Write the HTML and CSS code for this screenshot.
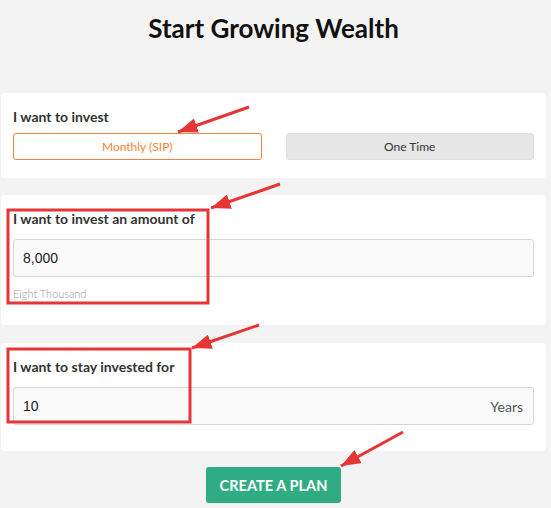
FILE: index.html
```html
<!DOCTYPE html>
<html>
<head>
<meta charset="utf-8">
<link rel="stylesheet" href="styles.css">
</head>
<body>
<div class="page">
  <h1 class="title">Start Growing Wealth</h1>

  <section class="card card-type">
    <div class="label">I want to invest</div>
    <div class="toggle">
      <button class="opt opt-active">Monthly (SIP)</button>
      <button class="opt">One Time</button>
    </div>
  </section>

  <section class="card card-amount">
    <div class="label">I want to invest an amount of</div>
    <div class="field"><span class="value">8,000</span></div>
    <div class="hint">Eight Thousand</div>
  </section>

  <section class="card card-years">
    <div class="label">I want to stay invested for</div>
    <div class="field"><span class="value">10</span><span class="unit">Years</span></div>
  </section>

  <div class="actions">
    <button class="cta">CREATE A PLAN</button>
  </div>

  <svg class="annot" width="551" height="508" viewBox="0 0 551 508">
    <defs>
      <marker id="ah" viewBox="0 0 10 10" refX="10" refY="5" markerWidth="6.5" markerHeight="5" preserveAspectRatio="none" orient="auto">
        <path d="M0,0 L10,5 L0,10 z" fill="#e53535"/>
      </marker>
    </defs>
    <g stroke="#e53535" stroke-width="3" fill="none">
      <line x1="249" y1="107" x2="178" y2="132" marker-end="url(#ah)"/>
      <line x1="280" y1="184" x2="211" y2="208" marker-end="url(#ah)"/>
      <line x1="259" y1="325" x2="192" y2="348" marker-end="url(#ah)"/>
      <line x1="403" y1="432" x2="341" y2="466" marker-end="url(#ah)"/>
      <rect x="8" y="210" width="200" height="93"/>
      <rect x="8" y="349" width="182" height="73"/>
    </g>
  </svg>
</div>
</body>
</html>
```

FILE: styles.css
```css
* { box-sizing: border-box; }
html, body {
  margin: 0;
  padding: 0;
  background: #f3f3f3;
}
body {
  font-family: Lato, "Open Sans", Arial, sans-serif;
  color: #333;
}
.page {
  position: relative;
  width: 551px;
  height: 508px;
  padding: 0 5px 0 1px;
  overflow: hidden;
}
.title {
  margin: 0;
  padding-top: 12px;
  height: 93px;
  text-align: center;
  font-size: 26px;
  line-height: 32px;
  font-weight: 700;
  color: #111;
}
.card {
  background: #fff;
  border-radius: 4px;
  padding: 14px 12px 0 12px;
}
.card + .card { margin-top: 17px; }
.card-years { margin-top: 18px !important; }
.label {
  font-size: 14px;
  line-height: 20px;
  font-weight: 700;
  color: #333;
}
.card-type { height: 85px; }
.toggle {
  display: grid;
  grid-template-columns: 1fr 1fr;
  gap: 24px;
  margin-top: 6px;
}
.opt {
  height: 27px;
  border: 1px solid #e0e0e0;
  background: #e6e6e6;
  border-radius: 3px;
  font-family: Lato, sans-serif;
  font-size: 12px;
  color: #333;
  padding: 0;
}
.opt-active {
  background: #fff;
  border-color: #f0843c;
  color: #f0843c;
}
.card-amount { height: 130px; }
.card-years { height: 108px; }
.field {
  margin-top: 10px;
  height: 38px;
  border: 1px solid #d6d6d6;
  border-radius: 3px;
  background: #fafafa;
  display: flex;
  align-items: center;
  justify-content: space-between;
  padding: 0 10px 0 9px;
}
.value {
  font-family: "Liberation Sans", Arial, sans-serif;
  font-size: 14px;
  color: #1a1a1a;
}
.unit {
  font-size: 14px;
  color: #555;
}
.hint {
  margin-top: 10px;
  font-size: 11px;
  line-height: 13px;
  font-weight: 300;
  color: #999;
}
.actions {
  display: flex;
  justify-content: center;
  margin-top: 16px;
}
.cta {
  width: 135px;
  height: 36px;
  border: 0;
  border-radius: 3px;
  background: #2fac83;
  color: #fff;
  font-family: Lato, sans-serif;
  font-weight: 700;
  font-size: 14.6px;
  padding: 0;
}
.annot {
  position: absolute;
  left: 0;
  top: 0;
  pointer-events: none;
}
```
